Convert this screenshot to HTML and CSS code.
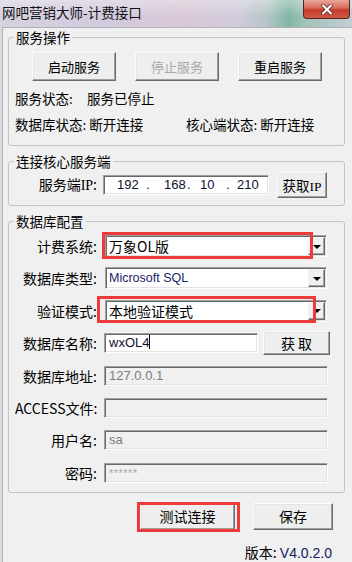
FILE: index.html
```html
<!DOCTYPE html>
<html lang="zh-CN">
<head>
<meta charset="UTF-8">
<meta name="viewport" content="width=device-width, initial-scale=1.0">
<title>网吧营销大师-计费接口</title>
<link rel="stylesheet" href="styles.css">
</head>
<body>
<div class="window">
<div class="titlebar">
<span class="title">网吧营销大师-计费接口</span>
<span class="close">
<svg width="12" height="11" viewBox="0 0 12 11"><path d="M2 1.5 L10 9.5 M10 1.5 L2 9.5" stroke="#5a1c16" stroke-width="3.6" stroke-linecap="round"/><path d="M2 1.5 L10 9.5 M10 1.5 L2 9.5" stroke="#fff" stroke-width="2.2" stroke-linecap="round"/></svg>
</span>
</div>
<div class="client">
<fieldset class="group group-service">
<legend>服务操作</legend>
<div class="btn-row">
<button class="btn">启动服务</button>
<button class="btn" disabled>停止服务</button>
<button class="btn">重启服务</button>
</div>
<div class="status-row status-first"><span class="status-a">服务状态:</span><span>服务已停止</span></div>
<div class="status-row"><span class="status-b">数据库状态: 断开连接</span><span>核心端状态: 断开连接</span></div>
</fieldset>
<fieldset class="group group-core">
<legend>连接核心服务端</legend>
<div class="core-row">
<label class="lbl">服务端<span class="serif">IP</span>:</label>
<div class="edit ip">
<span>192</span><span>.</span><span>168</span><span>.</span><span>10</span><span>.</span><span>210</span>
</div>
<button class="btn btn-ip">获取<span class="serif">IP</span></button>
</div>
</fieldset>
<fieldset class="group group-db">
<legend>数据库配置</legend>
<div class="form-grid">
<label class="lbl">计费系统:</label>
<div class="combo">
<span class="combo-value">万象OL版</span>
<span class="combo-arrow"><i></i></span>
<span class="mark mark-billing"></span>
</div>
<label class="lbl">数据库类型:</label>
<div class="combo">
<span class="combo-value latin">Microsoft SQL</span>
<span class="combo-arrow"><i></i></span>
</div>
<label class="lbl">验证模式:</label>
<div class="combo">
<span class="combo-value">本地验证模式</span>
<span class="combo-arrow"><i></i></span>
<span class="mark mark-auth"></span>
</div>
<label class="lbl">数据库名称:</label>
<div class="name-cell">
<div class="edit edit-name">wxOL4<span class="caret"></span></div>
<button class="btn btn-fetch">获 取</button>
</div>
<label class="lbl">数据库地址:</label>
<div class="edit readonly">127.0.0.1</div>
<label class="lbl">ACCESS文件:</label>
<div class="edit readonly"></div>
<label class="lbl">用户名:</label>
<div class="edit readonly">sa</div>
<label class="lbl">密码:</label>
<div class="edit readonly pwd">******</div>
</div>
</fieldset>
<div class="actions">
<div class="test-wrap">
<button class="btn btn-action">测试连接</button>
<span class="mark mark-test"></span>
</div>
<button class="btn btn-action btn-save">保存</button>
</div>
<div class="version">版本: <span class="ver">V4.0.2.0</span></div>
</div>
</div>
</body>
</html>
```

FILE: styles.css
```css
* {
box-sizing: border-box;
}
body {
margin: 0;
background: #f0f0f0;
font-family: "Noto Sans CJK SC", "Liberation Sans", sans-serif;
font-size: 13px;
color: #000;
}
.window {
width: 352px;
height: 562px;
display: flex;
flex-direction: column;
background: #dcd8e4;
overflow: hidden;
}
.titlebar {
height: 27px;
flex: none;
display: flex;
align-items: flex-start;
background:
linear-gradient(180deg, rgba(255,255,255,0.35), rgba(255,255,255,0) 60%),
linear-gradient(90deg, #d6d1df 0%, #d2cade 30%, #d8c7d6 52%, #d0cadb 68%, #b4c6c6 76%, #80b6a4 82%, #9fc2b6 86%, #c4cdd6 100%);
}
.title {
padding: 3px 0 0 2px;
font-size: 13.5px;
line-height: 18px;
color: #111;
}
.close {
margin-left: auto;
margin-right: 2px;
width: 47px;
height: 19px;
display: flex;
align-items: center;
justify-content: center;
background: linear-gradient(180deg, #e8a899 0%, #d6685a 45%, #c43a2c 55%, #cf5a42 100%);
border: 1px solid #5b2320;
border-top: none;
border-radius: 0 0 4px 4px;
}
.client {
flex: 1;
margin-left: 2px;
background: #f0f0f0;
border-left: 1px solid #b4b4b8;
border-top: 1px solid #aeb0b8;
padding: 1px 7px 0 5px;
}
.group {
margin: 0;
padding: 7px 15px 8px 6px;
border: 1px solid #c4c4c4;
border-radius: 3px;
min-width: 0;
}
.group legend {
padding: 0 2px;
margin-left: -1px;
font-size: 13.5px;
line-height: 16px;
}
.group-core {
margin-top: 7px;
padding-top: 3px;
padding-bottom: 7px;
}
.group-db {
margin-top: 7px;
padding-top: 6px;
padding-bottom: 8px;
}
.btn {
font-family: inherit;
font-size: 13px;
color: #000;
background: #eeeeee;
border: 1px solid;
border-color: #fcfcfc #6a6a6a #6a6a6a #fcfcfc;
box-shadow: inset -1px -1px 0 #a0a0a0, inset 1px 1px 0 #e6e6e6;
padding: 0;
cursor: pointer;
}
.btn:disabled {
color: #a8a8a8;
}
.btn-row {
display: flex;
gap: 19px;
padding-left: 17px;
}
.btn-row .btn {
width: 84px;
height: 29px;
}
.status-row {
display: flex;
height: 26px;
align-items: center;
font-size: 13.5px;
}
.status-first {
margin-top: 4px;
}
.status-a {
width: 72px;
}
.status-b {
width: 171px;
}
.serif {
font-family: "Liberation Serif", serif;
}
.lbl {
text-align: right;
font-size: 14px;
line-height: 22px;
white-space: nowrap;
}
.core-row {
display: grid;
grid-template-columns: 82px 166px 52px;
column-gap: 6px;
align-items: center;
height: 26px;
}
.core-row .btn-ip {
margin-left: 2px;
height: 26px;
font-size: 13.5px;
}
.edit {
height: 20px;
background: #fff;
border: 1px solid;
border-color: #a0a0a0 #fff #fff #a0a0a0;
box-shadow: inset 1px 1px 0 #696969, inset -1px -1px 0 #e3e3e3;
padding: 0 4px;
font-family: "Liberation Sans", sans-serif;
font-size: 13px;
line-height: 18px;
white-space: nowrap;
overflow: hidden;
}
.edit.readonly {
background: #f0f0f0;
color: #7c7c7c;
}
.edit.pwd {
color: #a8a8a8;
font-size: 11px;
letter-spacing: 0.5px;
}
.ip {
display: grid;
grid-template-columns: 29px 18px 23px 13px 26px 11px auto;
padding-left: 13px;
color: #0c1030;
}
.form-grid {
display: grid;
grid-template-columns: 82px 224px;
column-gap: 7px;
row-gap: 10.4px;
grid-auto-rows: 22px;
align-items: center;
}
.combo {
position: relative;
height: 22px;
margin: 0 1px;
display: flex;
background: #fff;
border: 1px solid;
border-color: #a0a0a0 #fff #fff #a0a0a0;
box-shadow: inset 1px 1px 0 #696969, inset -1px -1px 0 #e3e3e3;
}
.combo-value {
flex: 1;
padding: 0 2px 0 3px;
font-size: 14px;
line-height: 20px;
white-space: nowrap;
}
.combo-value.latin {
font-family: "Liberation Sans", sans-serif;
font-size: 12.5px;
color: #1a2366;
}
.combo-arrow {
width: 17px;
margin: 1px 1px 1px 0;
display: flex;
align-items: center;
justify-content: center;
background: #f0f0f0;
border: 1px solid;
border-color: #f4f4f4 #6a6a6a #6a6a6a #f4f4f4;
box-shadow: inset -1px -1px 0 #a0a0a0;
}
.combo-arrow i {
width: 0;
height: 0;
border-left: 4px solid transparent;
border-right: 4px solid transparent;
border-top: 4px solid #000;
margin-top: 1px;
}
.mark {
position: absolute;
border: 3px solid #ee3a3a;
pointer-events: none;
}
.mark-billing {
left: -4px;
top: -4px;
width: 211px;
height: 27px;
}
.mark-auth {
left: -9px;
top: -5px;
width: 219px;
height: 27px;
}
.name-cell {
display: flex;
align-items: center;
gap: 5px;
}
.edit-name {
width: 154px;
flex: none;
color: #0c1030;
}
.caret {
display: inline-block;
width: 1px;
height: 14px;
background: #000;
vertical-align: -2px;
}
.btn-fetch {
width: 67px;
height: 24px;
flex: none;
font-size: 14px;
}
.actions {
display: flex;
justify-content: flex-end;
gap: 18px;
margin-top: 10px;
padding-right: 12px;
}
.test-wrap {
position: relative;
}
.btn-action {
width: 95px;
height: 27px;
font-size: 14px;
}
.btn-save {
width: 80px;
}
.mark-test {
left: -3px;
top: -1px;
width: 103px;
height: 30px;
}
.version {
margin-top: 14px;
padding-right: 13px;
text-align: right;
font-size: 14px;
line-height: 16px;
}
.ver {
font-family: "Liberation Sans", sans-serif;
color: #16205a;
}
```
